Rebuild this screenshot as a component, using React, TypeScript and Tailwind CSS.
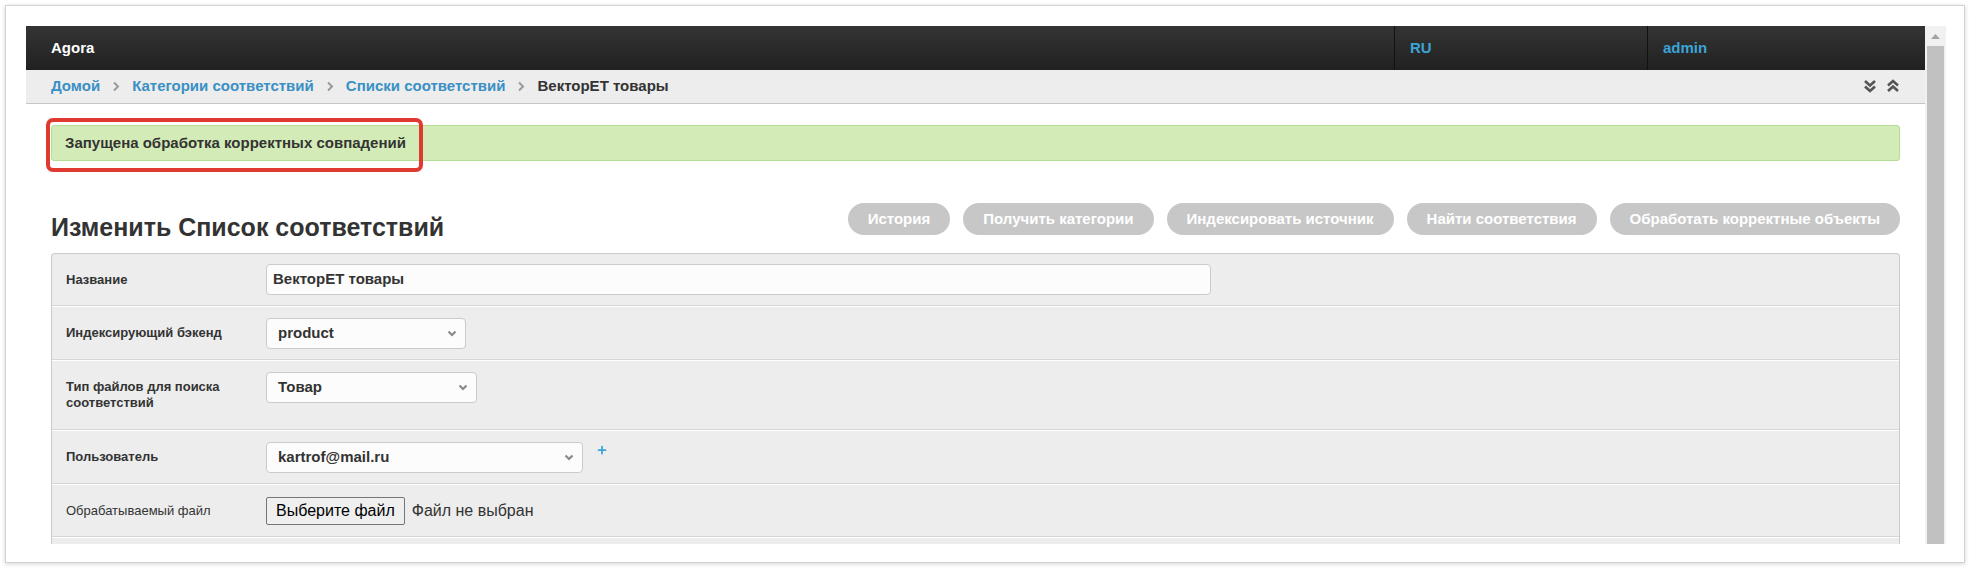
import { Plus } from "lucide-react";

const Sep = () => (
  <svg width="8" height="11" viewBox="0 0 8 11" className="mx-[12px]">
    <polyline points="2,1.5 6,5.5 2,9.5" fill="none" stroke="#9a9a9a" strokeWidth="2" />
  </svg>
);

const Caret = () => (
  <svg width="10" height="7" viewBox="0 0 10 7">
    <polyline points="1.5,1.5 5,5 8.5,1.5" fill="none" stroke="#8a8a8a" strokeWidth="2.2" />
  </svg>
);

const DoubleChevron: React.FC<{ up?: boolean }> = ({ up }) => (
  <svg width="14" height="14" viewBox="0 0 14 14" className={up ? "rotate-180" : ""}>
    <polyline points="2,2 7,6.5 12,2" fill="none" stroke="#555" strokeWidth="2.6" />
    <polyline points="2,7.5 7,12 12,7.5" fill="none" stroke="#555" strokeWidth="2.6" />
  </svg>
);

const Select: React.FC<{ value: string; width: string }> = ({ value, width }) => (
  <div
    className={`${width} h-[31px] bg-[#fcfcfc] border border-[#cbcbcb] rounded-[4px] flex items-center justify-between pl-[11px] pr-[8px] text-[15px] font-bold text-[#333]`}
  >
    <span>{value}</span>
    <Caret />
  </div>
);

const buttons = [
  "История",
  "Получить категории",
  "Индексировать источник",
  "Найти соответствия",
  "Обработать корректные объекты",
];

export default function App() {
  return (
    <div className="w-[1972px] h-[570px] bg-white p-[5px] font-['Liberation_Sans',Arial,sans-serif] text-[#333]">
      <div className="w-[1960px] h-[558px] bg-white border border-[#d2d2d2] shadow-[0_1px_4px_rgba(0,0,0,0.18)] pt-[20px] pl-[20px]">
        <div className="w-[1920px] h-[518px] flex overflow-hidden">
          <div className="flex-1 min-w-0">
            {/* navbar */}
            <div className="h-[44px] flex bg-gradient-to-b from-[#343434] to-[#212121] text-[15px] font-bold">
              <div className="flex-1 flex items-center pl-[25px] text-white">Agora</div>
              <div className="w-[253px] flex items-center pl-[15px] border-l border-[#111] text-[#3ca4d6]">RU</div>
              <div className="w-[278px] flex items-center pl-[15px] border-l border-[#111] text-[#3ca4d6]">admin</div>
            </div>

            {/* breadcrumb */}
            <div className="h-[34px] bg-[#ededed] border-b border-[#c6c6c6] px-[25px] flex items-center justify-between text-[15px] font-bold">
              <div className="flex items-center">
                <span className="text-[#3a90c4]">Домой</span>
                <Sep />
                <span className="text-[#3a90c4]">Категории соответствий</span>
                <Sep />
                <span className="text-[#3a90c4]">Списки соответствий</span>
                <Sep />
                <span className="text-[#333]">ВекторЕТ товары</span>
              </div>
              <div className="flex items-center gap-[9px] mt-[-1px]">
                <DoubleChevron />
                <DoubleChevron up />
              </div>
            </div>

            <div className="px-[25px]">
              {/* alert */}
              <div className="relative mt-[21px] h-[36px] bg-[#d3ecb7] border border-[#b5dc93] rounded-[3px] pl-[13px] flex items-center text-[15px] font-bold text-[#333]">
                Запущена обработка корректных совпадений
                <div className="absolute left-[-6px] top-[-8px] w-[377px] h-[54px] border-[4px] border-[#e0392f] rounded-[7px]" />
              </div>

              {/* title + actions */}
              <div className="mt-[42px] flex justify-between items-start">
                <h1 className="mt-[9px] text-[25px] leading-[30px] font-bold text-[#333]">
                  Изменить Список соответствий
                </h1>
                <div className="flex gap-[13px]">
                  {buttons.map((b) => (
                    <div
                      key={b}
                      className="h-[32px] px-[20px] rounded-full bg-[#c7c7c7] text-white text-[15px] font-bold flex items-center"
                    >
                      {b}
                    </div>
                  ))}
                </div>
              </div>

              {/* form panel */}
              <div className="mt-[11px] bg-[#ededed] border border-[#cacaca] border-b-0 rounded-t-[4px] text-[13px]">
                <div className="h-[52px] flex items-center border-b border-[#d6d6d6]">
                  <div className="w-[214px] pl-[14px] font-bold">Название</div>
                  <div className="w-[945px] h-[31px] bg-[#fcfcfc] border border-[#cbcbcb] rounded-[4px] flex items-center pl-[6px] text-[15px] font-bold">
                    ВекторЕТ товары
                  </div>
                </div>

                <div className="h-[54px] flex items-center border-t border-white border-b border-b-[#d6d6d6]">
                  <div className="w-[214px] pl-[14px] font-bold">Индексирующий бэкенд</div>
                  <Select value="product" width="w-[200px]" />
                </div>

                <div className="h-[70px] flex items-start pt-[11px] border-t border-white border-b border-b-[#d6d6d6]">
                  <div className="w-[214px] pl-[14px] pr-[30px] pt-[7px] font-bold leading-[16px]">
                    Тип файлов для поиска соответствий
                  </div>
                  <Select value="Товар" width="w-[211px]" />
                </div>

                <div className="h-[54px] flex items-center border-t border-white border-b border-b-[#d6d6d6]">
                  <div className="w-[214px] pl-[14px] font-bold">Пользователь</div>
                  <Select value="kartrof@mail.ru" width="w-[317px]" />
                  <Plus size={12} strokeWidth={3.5} className="ml-[13px] mb-[14px] text-[#3aa3d3]" />
                </div>

                <div className="h-[53px] flex items-center border-t border-white border-b border-b-[#d6d6d6]">
                  <div className="w-[214px] pl-[14px]">Обрабатываемый файл</div>
                  <div className="flex items-center text-[16px]">
                    <div className="h-[28px] px-[9px] bg-[#efefef] border border-[#767676] rounded-[2px] flex items-center text-black">
                      Выберите файл
                    </div>
                    <span className="ml-[7px] text-[#333]">Файл не выбран</span>
                  </div>
                </div>

                <div className="h-[20px] border-t border-white" />
              </div>
            </div>
          </div>

          {/* scrollbar */}
          <div className="w-[21px] shrink-0 bg-[#f1f1f1] flex flex-col items-center">
            <div className="h-[20px] shrink-0 flex items-center justify-center">
              <svg width="9" height="5" viewBox="0 0 9 5">
                <polygon points="0,5 4.5,0 9,5" fill="#a3a3a3" />
              </svg>
            </div>
            <div className="w-[17px] flex-1 bg-[#c1c1c1]" />
          </div>
        </div>
      </div>
    </div>
  );
}
